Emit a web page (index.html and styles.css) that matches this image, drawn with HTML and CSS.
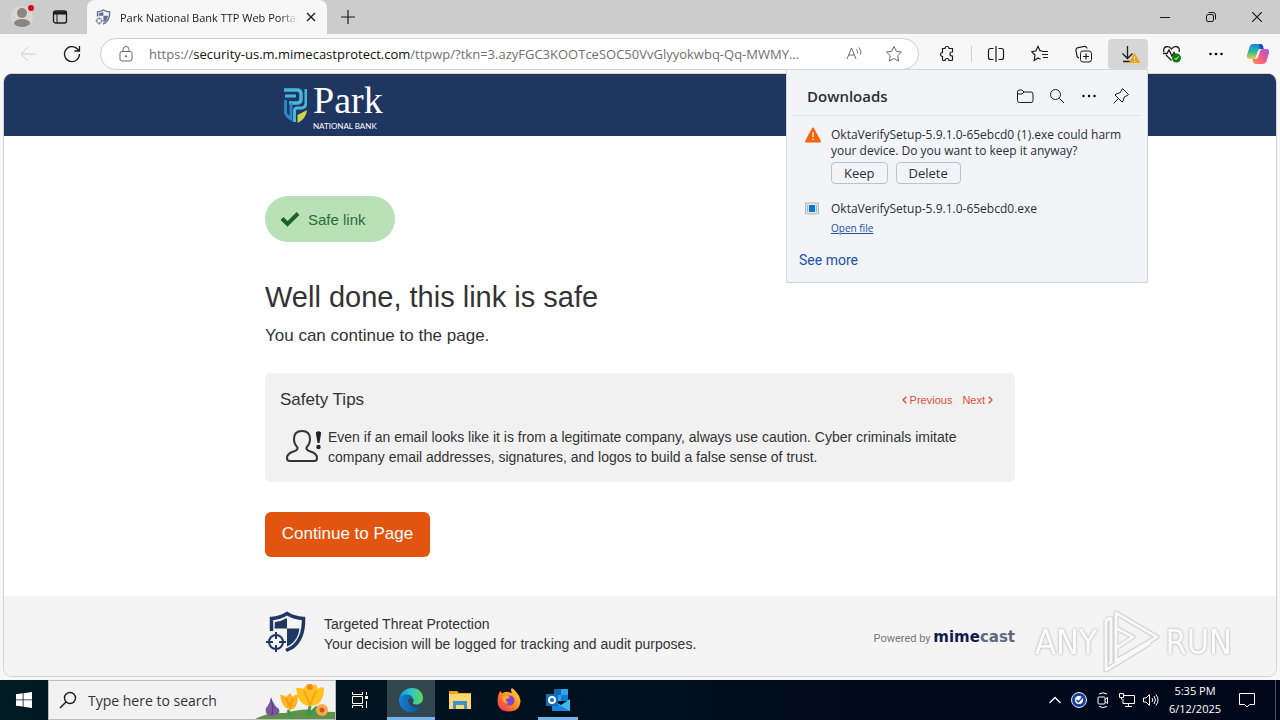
FILE: index.html
```html
<!DOCTYPE html>
<html lang="en">
<head>
    <meta charset="UTF-8">
    <title>Park National Bank TTP Web Portal</title>
    <meta name="viewport" content="width=device-width, initial-scale=1.0">
    <link rel="stylesheet" href="styles.css">
</head>
<body>
    <!-- Tabs -->
    <header class="titlebar">
        <button class="title-btn profile" aria-label="Profile">
            <svg width="24" height="24" viewBox="0 0 24 24"><circle cx="12" cy="12" r="11" fill="#d9d6d4"/><circle cx="12" cy="8" r="5" fill="#8b8582"/><ellipse cx="12" cy="18" rx="8" ry="4" fill="#8b8582"/><circle cx="21" cy="3" r="3" fill="#d0021b"/></svg>
        </button>
        <button class="title-btn" aria-label="Tab actions">
            <svg class="line" width="16" height="16" viewBox="0 0 16 16"><rect x="1.5" y="2" width="13" height="12" rx="2" stroke-width="1.300"/><path d="M1.5 4h13" stroke-width="3"/><path d="M5 4v10"/></svg>
        </button>
        <div class="tab">
            <svg class="favicon" width="16" height="16" viewBox="0 0 42 42"><use href="#shield"/></svg>
            <span class="tab-title">Park National Bank TTP Web Portal</span>
            <button class="tab-close" aria-label="Close tab">
                <svg class="line" width="10" height="10" viewBox="0 0 10 10"><path d="M1 1l8 8M9 1L1 9" stroke-width="1.300"/></svg>
            </button>
        </div>
        <button class="title-btn" aria-label="New tab">
            <svg class="line" width="14" height="14" viewBox="0 0 14 14"><path d="M7 0v14M0 7h14" stroke-width="1.200"/></svg>
        </button>
        <div class="window-controls">
            <button aria-label="Minimize"><svg class="line" width="10" height="10" viewBox="0 0 10 10"><path d="M0 5.5h10"/></svg></button>
            <button aria-label="Restore"><svg class="line" width="10" height="10" viewBox="0 0 10 10"><rect x=".5" y="2.5" width="7" height="7" rx="1.5"/><path d="M2.5.5H7A2.5 2.5 0 0 1 9.500 3v4.500"/></svg></button>
            <button aria-label="Close"><svg class="line" width="10" height="10" viewBox="0 0 10 10"><path d="M0 0l10 10M10 0L0 10" stroke-width="1.200"/></svg></button>
        </div>
    </header>

    <!-- Address bar and toolbar icons -->
    <nav class="toolbar">
        <button class="tool" aria-label="Back" disabled>
            <svg class="line faded" width="18" height="18" viewBox="0 0 18 18"><path d="M17 9H2M9 2L2 9l7 7"/></svg>
        </button>
        <button class="tool" aria-label="Refresh">
            <svg class="line" width="18" height="18" viewBox="0 0 18 18"><path d="M16.500 9A7.500 7.500 0 1 1 14 3.500L16 5.500M16.500 1v5h-5" stroke-width="1.300"/></svg>
        </button>
        <div class="address">
            <svg class="line grey" width="14" height="16" viewBox="0 0 14 16"><rect x="1" y="5.500" width="12" height="9.500" rx="2"/><path d="M4 5.500V3.500a3 3 0 0 1 6 0v2"/><circle cx="7" cy="10.300" r=".7" fill="#666"/></svg>
            <div class="url" role="textbox" aria-label="Address" tabindex="0">https://<span>security-us.m.mimecastprotect.com</span>/ttpwp/?tkn=3.azyFGC3KOOTceSOC50VvGlyyokwbq-Qq-MWMY...</div>
            <button class="tool" aria-label="Read aloud">
                <svg class="line grey" width="18" height="18" viewBox="0 0 18 18"><path d="M2 14L6.500 3 11 14M3.600 10h5.800M11.500 4.500q1.500 1.500 1 4M14 2.500q3 3 1.500 7"/></svg>
            </button>
            <button class="tool" aria-label="Add to favorites">
                <svg class="line grey" width="18" height="18" viewBox="0 0 18 18"><path d="M9 1.500l2.300 4.800 5.200.7-3.800 3.700.9 5.300L9 13.500 4.400 16l.9-5.300L1.500 7l5.200-.7z"/></svg>
            </button>
        </div>
        <button class="tool" aria-label="Extensions">
            <svg class="line" width="18" height="18" viewBox="0 0 18 18"><path d="M4.500 3.500H7a2 2 0 0 1 4 0h3.500V7H14a2 2 0 1 0 0 4h.5v3.500a1 1 0 0 1-1 1H11a2 2 0 0 0-4 0H5.500a1 1 0 0 1-1-1V11.500a2 2 0 0 1 0-4z" stroke-width="1.200"/></svg>
        </button>
        <span class="divider"></span>
        <button class="tool" aria-label="Split screen">
            <svg class="line" width="18" height="18" viewBox="0 0 18 18"><path d="M6.500 3.500h-3a2 2 0 0 0-2 2v7a2 2 0 0 0 2 2h3M11.500 3.500h3a2 2 0 0 1 2 2v7a2 2 0 0 1-2 2h-3M9 1v16" stroke-width="1.200"/></svg>
        </button>
        <button class="tool" aria-label="Favorites">
            <svg class="line" width="18" height="18" viewBox="0 0 18 18"><path d="M11 6l-2-.3L7 1.500 4.800 6l-4 .7L4 10l-.8 5.500L7 13l2.500 1.300M11 6.500h6M11 9.500h6M12 12.500h5" stroke-width="1.200"/></svg>
        </button>
        <button class="tool" aria-label="Collections">
            <svg class="line" width="18" height="18" viewBox="0 0 18 18"><rect x="5.500" y="6" width="11" height="11" rx="2.500"/><path d="M11 8.500v6M8 11.500h6M4 13a3 3 0 0 1-2-2L1 5.500a2.500 2.500 0 0 1 2-2.800l6-1.200a2.500 2.500 0 0 1 3 2" stroke-width="1.200"/></svg>
        </button>
        <div class="download-wrap">
            <button class="tool active" aria-label="Downloads">
                <svg class="line" width="24" height="22" viewBox="0 0 24 22"><path d="M11.500 3v12M6.500 10.500l5 5 5-5M7 18.500h8" stroke-width="1.300"/><path d="M18.500 10.500l5 9h-10z" fill="#f7a11a" stroke="#f7a11a"/><path d="M18.500 13.500v3M18.500 18v1" stroke="#fff"/></svg>
            </button>
            <section class="downloads">
                <div class="downloads-head">
                    <h2>Downloads</h2>
                    <button aria-label="Open downloads folder"><svg class="line" width="18" height="16" viewBox="0 0 18 16"><path d="M1.500 4a2 2 0 0 1 2-2H6l2 2h7a2 2 0 0 1 2 2v6.500a2 2 0 0 1-2 2H3.500a2 2 0 0 1-2-2zM1.500 6H6l2-2"/></svg></button>
                    <button aria-label="Search downloads"><svg class="line" width="16" height="16" viewBox="0 0 16 16"><circle cx="6.500" cy="6.500" r="5"/><path d="M10.300 10.300L15 15"/></svg></button>
                    <button aria-label="More options"><svg width="16" height="16" viewBox="0 0 16 16"><circle cx="2.500" cy="8" r="1.200"/><circle cx="8" cy="8" r="1.200"/><circle cx="13.500" cy="8" r="1.200"/></svg></button>
                    <button aria-label="Pin"><svg class="line" width="18" height="18" viewBox="0 0 18 18"><path d="M10.500 1.500l6 6-1.500 1.200-2.500 1L11 14l-1 1-7-7 1-1 4.500-1.500 1-2.500zM6.500 11.500L1.500 16.500"/></svg></button>
                </div>
                <div class="download-item">
                    <svg width="16" height="16" viewBox="0 0 16 16"><path d="M8 1.500L15 14.500H1z" fill="#f7630c" stroke="#f7630c" stroke-width="2" stroke-linejoin="round"/><path d="M8 5v5M8 11.500v1.500" stroke="#fff" stroke-width="1.300"/></svg>
                    <div>
                        <p>OktaVerifySetup-5.9.1.0-65ebcd0 (1).exe could harm your device. Do you want to keep it anyway?</p>
                        <div class="choices">
                            <button>Keep</button>
                            <button>Delete</button>
                        </div>
                    </div>
                </div>
                <div class="download-item">
                    <svg width="16" height="16" viewBox="0 0 16 16"><path d="M.5 2h13v11H.5z" fill="#e4e4e4" stroke="#b5b5b5"/><path d="M4 4h6v7H4z" fill="#0a78d4"/><path d="M2.500 4v7M11.500 4v7" stroke="#8ab8e0"/></svg>
                    <div>
                        <p>OktaVerifySetup-5.9.1.0-65ebcd0.exe</p>
                        <a class="open-file" href="#">Open file</a>
                    </div>
                </div>
                <a class="see-more" href="#">See more</a>
            </section>
        </div>
        <button class="tool" aria-label="Browser essentials">
            <svg class="line" width="20" height="18" viewBox="0 0 20 18"><path d="M2 7C0 1 7 0 9.500 4 12 0 19 1 17 7M4 10l5.500 5.500M1 8.500h4L7 5l3 6 2-3.500 1 1.500" stroke-width="1.300"/><circle cx="14.500" cy="13" r="4.500" fill="#107c10" stroke="none"/><path d="M12.500 13l1.500 1.500 2.500-3" stroke="#fff"/></svg>
        </button>
        <button class="tool" aria-label="Settings and more">
            <svg width="16" height="16" viewBox="0 0 16 16"><circle cx="2.500" cy="8" r="1.300"/><circle cx="8" cy="8" r="1.300"/><circle cx="13.500" cy="8" r="1.300"/></svg>
        </button>
        <button class="tool copilot" aria-label="Copilot">
            <svg width="22" height="20" viewBox="0 0 22 20">
                <defs>
                    <linearGradient id="cp1" x1="0" y1="0" x2="0" y2="1"><stop offset="0" stop-color="#2280d8"/><stop offset=".5" stop-color="#2ab9a5"/><stop offset="1" stop-color="#f3d02a"/></linearGradient>
                    <linearGradient id="cp2" x1="1" y1="0" x2="0" y2="1"><stop offset="0" stop-color="#a855e8"/><stop offset=".5" stop-color="#ee5a8c"/><stop offset="1" stop-color="#fb8a4c"/></linearGradient>
                </defs>
                <path d="M6 0h7q2 0 2.700 2l.8 3h-3q-2 0-2.600 2L9 13q-.7 2-3 2H3q-4 0-3-4L2.500 3Q3.500 0 6 0z" fill="url(#cp1)"/>
                <path d="M16 20H9q-2 0-2.700-2l-.8-3h3q2 0 2.600-2L13 7q.7-2 3-2h3q4 0 3 4l-2.500 8q-1 3-3.500 3z" fill="url(#cp2)"/>
                <path d="M12 0h2q1.500.5 2 2l.7 3H13z" fill="#1749b8"/>
            </svg>
        </button>
    </nav>

    <!-- Web page -->
    <main class="page">
        <div class="bank-bar">
            <div class="container">
                <div class="bank-logo">
                    <svg width="24" height="36" viewBox="0 0 24 36">
                        <path d="M1 3h13q4 0 4 4v5q0 4-4 4H6" fill="none" stroke="#49b6dc" stroke-width="3.500"/>
                        <path d="M2 9h11" fill="none" stroke="#49b6dc" stroke-width="3"/>
                        <path d="M23 2v13q0 6-5 6h-4q-2.500 0-2.500 3v11" fill="none" stroke="#49b6dc" stroke-width="3"/>
                        <path d="M2.500 13v13q2 4 5.500 6V16" fill="none" stroke="#2b86bd" stroke-width="3"/>
                        <path d="M14.500 28l9.500-5q-1 9-9.500 13z" fill="#c9d84a"/>
                    </svg>
                    <div>
                        <div class="bank-name">Park</div>
                        <div class="bank-sub">NATIONAL BANK</div>
                    </div>
                </div>
            </div>
        </div>

        <div class="container content">
            <div class="badge">
                <svg width="20" height="16" viewBox="0 0 20 16"><path d="M2 7.500L7.500 13 18 2.500" fill="none" stroke="#22602b" stroke-width="4"/></svg>
                Safe link
            </div>
            <h1>Well done, this link is safe</h1>
            <p class="lead">You can continue to the page.</p>

            <section class="tips">
                <div class="tips-head">
                    <h2>Safety Tips</h2>
                    <a href="#"><svg width="5" height="8" viewBox="0 0 5 8"><path d="M4.300.7L1 4l3.300 3.300"/></svg>Previous</a>
                    <a href="#">Next<svg width="5" height="8" viewBox="0 0 5 8"><path d="M.7.7L4 4 .7 7.300"/></svg></a>
                </div>
                <div class="tip">
                    <svg width="36" height="34" viewBox="0 0 36 34"><path d="M16 1c-5 0-8 3-8 8 0 4 1.500 6.500 3.500 8.500.5 2-.5 3-4 4C3 23 1 25 1 28q0 3 2.500 3h25q2.500 0 2.500-3c0-3-2-5-6.500-6.500-3.500-1-4.500-2-4-4C22.500 15.500 24 13 24 9c0-5-3-8-8-8z" fill="none" stroke="#333" stroke-width="2"/><path d="M29.800 2.500q2.700-2.500 5.400 0L33.500 13h-2z" fill="#222"/><circle cx="32.500" cy="17" r="2.200" fill="#222"/></svg>
                    <p>Even if an email looks like it is from a legitimate company, always use caution. Cyber criminals imitate company email addresses, signatures, and logos to build a false sense of trust.</p>
                </div>
            </section>

            <button class="continue">Continue to Page</button>
        </div>

        <footer class="page-footer">
            <div class="container">
                <svg class="shield" width="42" height="42" viewBox="0 0 42 42">
                    <g id="shield">
                        <path d="M6.500 20V7.500Q15 7 22 2.500 29 7 38.500 7.500 39 28 27 36.500L21 39.500" fill="none" stroke="#1f3763" stroke-width="3.500"/>
                        <path d="M10 11q6-.5 12-4v10.500H9.500z" fill="#1f3763"/>
                        <path d="M22 17.500h12.500Q33 29 25 34l-3 1.500z" fill="#1f3763"/>
                        <circle cx="11" cy="31" r="10" fill="#f4f4f4"/>
                        <circle cx="11" cy="31" r="7" fill="#f4f4f4" stroke="#1f3763" stroke-width="2"/>
                        <path d="M11 21v7M11 34v7M1 31h7M14 31h7" stroke="#1f3763" stroke-width="2"/>
                    </g>
                </svg>
                <div class="footer-text">
                    <p>Targeted Threat Protection</p>
                    <p>Your decision will be logged for tracking and audit purposes.</p>
                </div>
                <div class="powered">Powered by <b>mime<span>cast</span></b></div>
            </div>
        </footer>

        <div class="watermark">
            <span>ANY</span>
            <svg width="60" height="64" viewBox="0 0 60 64"><path d="M15 3L56 27 15 51zM15 18v20l17-11zM5 10v50l44-27M5 10l5-2v44" fill="none" stroke="#c9c9c9" stroke-width="5" stroke-linejoin="round"/><path d="M15 3L56 27 15 51zM15 18v20l17-11zM5 10v50l44-27M5 10l5-2v44" fill="none" stroke="#fafafa" stroke-width="3" stroke-linejoin="round"/></svg>
            <span>RUN</span>
        </div>
    </main>

    <!-- Windows taskbar -->
    <footer class="taskbar">
        <button class="task" aria-label="Start">
            <svg width="16" height="16" viewBox="0 0 16 16" fill="#fff"><path d="M0 2.300L6.700 1.300v6.200H0zM7.500 1.200L16 0v7.500H7.500zM0 8.300h6.700v6.300L0 13.700zM7.500 8.300H16V16l-8.500-1.200z"/></svg>
        </button>
        <label class="search">
            <svg class="line" width="18" height="18" viewBox="0 0 18 18"><circle cx="11" cy="7" r="5.500" stroke-width="1.400"/><path d="M7 11l-6 6" stroke-width="1.400"/></svg>
            <input type="text" placeholder="Type here to search" aria-label="Type here to search">
            <svg width="80" height="38" viewBox="0 0 80 38">
                <path d="M0 38Q12 31 30 32q20-6 35-2 8 1 15 1v7z" fill="#5f9148"/>
                <path d="M16 16q-1 7-5 11-2 7 6 8 9-1 7-7-5-3-8-12z" fill="#78579d"/><path d="M16 18q3 9 1 16" fill="none" stroke="#543b7e"/>
                <path d="M33 29l4 9M55 25q-1 6-3 11M62 26q-3 2-9 10" fill="none" stroke="#3d9a4b" stroke-width="3"/>
                <path d="M25 14q4 0 6 2l4-4 3 4q2-3 5-2 0 14-8 15-8-2-10-15z" fill="#ffb31e"/><path d="M31 17l4 9 3-9" fill="none" stroke="#f39a1d" stroke-width="2"/>
                <path d="M41 7q5-1 7 1l4-5 4 2 5-2 2 5q3-3 6-1 0 17-13 18Q43 25 41 7z" fill="#ffc31c"/><path d="M49 10l6 14 6-14" fill="none" stroke="#f6a51d" stroke-width="2"/><circle cx="55" cy="6" r="3" fill="#f18622"/>
                <circle cx="67" cy="29" r="6" fill="#f9a84b"/><circle cx="67" cy="29" r="2.500" fill="#c85a20"/>
            </svg>
        </label>
        <button class="task" aria-label="Task view">
            <svg class="line white" width="18" height="16" viewBox="0 0 18 16"><path d="M1.500 0v2.500h10V0M1.500 16v-2.500h10V16M1.500 4.500h10v7h-10zM15.500 0v3M15.500 9v7"/><path d="M14 4h3v3h-3z" fill="#fff" stroke="none"/></svg>
        </button>
        <button class="task current" aria-label="Microsoft Edge">
            <svg width="24" height="24" viewBox="0 0 24 24">
                <defs>
                    <linearGradient id="edgeTop" x1="0" x2="1"><stop offset="0" stop-color="#1b94dc"/><stop offset=".5" stop-color="#2ec4c7"/><stop offset="1" stop-color="#62d957"/></linearGradient>
                    <linearGradient id="edgeLow" x1="0" x2="1"><stop offset="0" stop-color="#1480d2"/><stop offset="1" stop-color="#0c4c9c"/></linearGradient>
                </defs>
                <path d="M0 12C1 3 8 0 13 0c7 0 11 5 11 10 0 4-3 6.500-6.500 6.500-3 0-4-1-3.500-2 1.500-1.500.5-5.500-3.500-5.500-5 0-8 4-7 9C1 16 0 14 0 12z" fill="url(#edgeTop)"/>
                <path d="M0 11c2-4 6-5 9-4.500 2 .3 4 1.500 5 3-4-1-6 3-4.500 6 2 4 8 5 13 2C20 22 16 24 12 24 5 24 0 19 0 11z" fill="url(#edgeLow)"/>
            </svg>
        </button>
        <button class="task" aria-label="File Explorer">
            <svg width="22" height="20" viewBox="0 0 22 20"><path d="M0 1h8l2 2h12v16H0z" fill="#e9a825"/><path d="M0 4h22v15H0z" fill="#ffd76b"/><path d="M4 19v-8h14v8h-3v-4H7v4z" fill="#3a94d6"/></svg>
        </button>
        <button class="task" aria-label="Firefox">
            <svg width="24" height="24" viewBox="0 0 24 24">
                <defs><linearGradient id="fox" x1="1" y1="0" x2="0" y2="1"><stop offset="0" stop-color="#ffe83c"/><stop offset=".5" stop-color="#ff8a1c"/><stop offset="1" stop-color="#f0246a"/></linearGradient></defs>
                <path d="M3 3q1 2 3 2 3-2 5-1l4 1q-2-3 0-5 3 2 5 5 3 3 3.500 7.500Q23 23.500 12 23.500.500 23.500.500 12.500.500 7 3 3z" fill="url(#fox)"/>
                <circle cx="12.500" cy="12.500" r="5" fill="#7a45d8"/><path d="M5 9q4-3 8 0-1 2-4 2 0 3 3 4-6 2-7-6z" fill="#ffa52a"/>
            </svg>
        </button>
        <button class="task running" aria-label="Outlook">
            <svg width="24" height="22" viewBox="0 0 24 22"><path d="M8 0h14v12H8z" fill="#28a8ea"/><path d="M8 0h7v6H8z" fill="#1269b6"/><path d="M15 6h7v6h-7z" fill="#1478d0"/><path d="M6 11l9 5 9-6v12H6z" fill="#3cb9f0"/><path d="M6 12l18 10H6z" fill="#1a82d8"/><path d="M0 5h12v12H0z" fill="#0f6cbd"/><circle cx="6" cy="11" r="3" fill="none" stroke="#fff" stroke-width="2"/></svg>
        </button>

        <div class="tray">
            <button aria-label="Show hidden icons"><svg class="line white" width="12" height="8" viewBox="0 0 12 8"><path d="M.500 7L6 1.500 11.500 7" stroke-width="1.300"/></svg></button>
            <button aria-label="Okta Verify"><svg width="16" height="16" viewBox="0 0 16 16"><circle cx="8" cy="8" r="7.500" fill="#1c3f9c" stroke="#dfe9ff"/><circle cx="8" cy="8" r="4" fill="#fff"/><path d="M5.500 8l2 2L12 4.500" fill="none" stroke="#1c3f9c" stroke-width="1.500"/></svg></button>
            <button aria-label="Meet Now"><svg class="line white" width="14" height="16" viewBox="0 0 14 16"><rect x="2" y="5" width="7" height="7" rx="1"/><path d="M9 7.500l2.500-2v6L9 9.500M3 2q4-2.500 8 0M3 14.500q4 2 8 0"/></svg></button>
            <button aria-label="Network"><svg class="line white" width="16" height="16" viewBox="0 0 16 16"><path d="M5 3.500h10.500v8H4V7M9.500 11.500v3M6 14.500h7M.5 1.500h4v4h-4zM2.500 5.500v2"/></svg></button>
            <button aria-label="Volume"><svg class="line white" width="16" height="14" viewBox="0 0 16 14"><path d="M.5 5h2.500l3.500-3.500v11L3 9H.5zM9 5q1.500 2 0 4M11 3q3 4 0 8M13 1.500q4 5.500 0 11"/></svg></button>
            <div class="clock"><span>5:35 PM</span><span>6/12/2025</span></div>
            <button class="notify" aria-label="Notifications"><svg class="line white" width="18" height="16" viewBox="0 0 18 16"><path d="M1.500 1.500h15v11h-5L9 15l-2.500-2.500h-5z"/></svg></button>
        </div>
    </footer>
</body>
</html>
```
FILE: styles.css
```css
* {
    margin: 0;
    padding: 0;
    box-sizing: border-box;
}
body {
    font-family: "Open Sans", "Noto Sans", sans-serif;
    font-size: 12px;
    color: #1b1b1b;
    background: #f7f7f7;
    min-height: 100vh;
    display: flex;
    flex-direction: column;
}
button {
    font: inherit;
    color: inherit;
    background: none;
    border: none;
    display: flex;
    align-items: center;
    justify-content: center;
}
svg {
    flex-shrink: 0;
}
.line {
    fill: none;
    stroke: #1b1b1b;
}
.line.grey {
    stroke: #6b6b6b;
}
.line.faded {
    stroke: #cfcfcf;
}
.line.white {
    stroke: #fff;
}

/* tab strip */
.titlebar {
    height: 34px;
    background: #cccccc;
    display: flex;
    align-items: stretch;
    padding-left: 3px;
}
.title-btn {
    width: 38px;
}
.tab {
    width: 240px;
    margin-left: 8px;
    padding: 0 10px 0 8px;
    display: flex;
    align-items: center;
    background: #f7f7f7;
    border-radius: 8px 8px 0 0;
}
.favicon {
    opacity: .7;
}
.tab-title {
    flex: 1;
    margin-left: 9px;
    font-size: 11px;
    white-space: nowrap;
    overflow: hidden;
    -webkit-mask-image: linear-gradient(to right, #000 90%, transparent);
    mask-image: linear-gradient(to right, #000 90%, transparent);
}
.tab-close {
    width: 12px;
    margin-left: 7px;
}
.tab + .title-btn {
    width: 42px;
}
.window-controls {
    display: flex;
    margin-left: auto;
}
.window-controls button {
    width: 46px;
}

/* toolbar */
.toolbar {
    height: 39px;
    padding: 0 4px 0 8px;
    display: flex;
    align-items: center;
    gap: 4px;
}
.tool {
    width: 40px;
    height: 30px;
    border-radius: 4px;
    flex-shrink: 0;
}
.tool.active {
    background: #d6d6d6;
}
.tool.copilot {
    width: 36px;
}
.address {
    flex: 1;
    min-width: 0;
    height: 32px;
    margin: 0 4px;
    padding: 0 4px 0 18px;
    display: flex;
    align-items: center;
    background: #fff;
    border: 1px solid #d0d0d0;
    border-radius: 16px;
}
.url {
    flex: 1;
    margin-left: 16px;
    font-size: 13px;
    color: #707070;
    white-space: nowrap;
    overflow: hidden;
}
.url span {
    color: #111;
}
.divider {
    width: 1px;
    height: 16px;
    background: #cfcfcf;
}

/* downloads flyout */
.download-wrap {
    position: relative;
}
.downloads {
    position: absolute;
    top: 100%;
    right: 0;
    z-index: 2;
    width: 362px;
    height: 214px;
    background: #f2f4f8;
    border: 1px solid #d3d6dc;
    color: #2b2f36;
}
.downloads-head {
    height: 46px;
    margin: 0 6px;
    padding: 8px 4px 0 14px;
    display: flex;
    align-items: center;
    border-bottom: 1px solid #e1e4e9;
}
.downloads-head h2 {
    flex: 1;
    font-size: 15px;
    font-weight: 600;
}
.downloads-head button {
    width: 32px;
    height: 32px;
}
.download-item {
    display: flex;
    align-items: flex-start;
    gap: 10px;
    padding: 11px 16px 0 18px;
    line-height: 16px;
}
.choices {
    display: flex;
    gap: 8px;
    margin-top: 3px;
    margin-bottom: 6px;
}
.choices button {
    height: 22px;
    padding: 0 12px;
    font-size: 13px;
    border: 1px solid #bfc2c8;
    border-radius: 4px;
}
.open-file {
    display: block;
    margin-top: 3px;
    font-size: 10px;
    color: #2450a8;
}
.see-more {
    display: inline-block;
    margin: 15px 12px 0;
    font-family: Roboto, sans-serif;
    font-size: 14px;
    line-height: 18px;
    color: #2450a8;
    text-decoration: none;
}

/* web page */
.page {
    position: relative;
    flex: 1;
    margin: 1px 4px 4px;
    display: flex;
    flex-direction: column;
    background: #fff;
    border-radius: 8px;
    box-shadow: 0 0 0 1px #d4d4d4;
    overflow: hidden;
    font-family: "Liberation Sans", Arial, sans-serif;
    color: #333;
}
.container {
    width: 100%;
    max-width: 750px;
    margin: 0 auto;
}
.bank-bar {
    height: 62px;
    background: #1f3661;
    border-top: 2px solid #2a3448;
}
.bank-logo {
    display: flex;
    align-items: center;
    gap: 6px;
    height: 58px;
    padding-left: 18px;
    color: #fff;
}
.bank-name {
    font-family: "Liberation Serif", serif;
    font-size: 38px;
    line-height: 42px;
}
.bank-sub {
    font-family: Lato, sans-serif;
    font-size: 8px;
    line-height: 10px;
}
.content {
    flex: 1;
    padding: 60px 0 39px;
}
.badge {
    width: 130px;
    height: 46px;
    padding-left: 15px;
    display: flex;
    align-items: center;
    gap: 8px;
    font-size: 15px;
    color: #2f6b38;
    background: #b8e1b8;
    border-radius: 23px;
}
h1 {
    margin-top: 37px;
    font-size: 29px;
    font-weight: normal;
    line-height: 36px;
}
.lead {
    margin-top: 9px;
    font-size: 17px;
    line-height: 24px;
}
.tips {
    margin-top: 25px;
    height: 109px;
    padding: 15px;
    background: #f1f1f1;
    border-radius: 5px;
}
.tips-head {
    display: flex;
    align-items: center;
    gap: 10px;
    padding-right: 7px;
}
.tips-head h2 {
    flex: 1;
    font-size: 17px;
    font-weight: normal;
    line-height: 24px;
}
.tips-head a {
    display: flex;
    align-items: center;
    gap: 3px;
    font-size: 11px;
    color: #dd5135;
    text-decoration: none;
}
.tips-head path {
    fill: none;
    stroke: #dd5135;
    stroke-width: 1.5;
}
.tip {
    display: flex;
    align-items: center;
    gap: 6px;
    margin-top: 15px;
    padding-left: 6px;
    font-size: 14px;
    line-height: 20px;
}
.continue {
    width: 165px;
    height: 45px;
    margin-top: 30px;
    padding-bottom: 2px;
    font-size: 17px;
    color: #fff;
    background: #e3540f;
    border-radius: 6px;
}
.page-footer {
    height: 80px;
    background: #f4f4f4;
}
.page-footer .container {
    display: flex;
    align-items: center;
    height: 76px;
}
.shield {
    margin-bottom: 4px;
}
.footer-text {
    flex: 1;
    margin-left: 17px;
    font-size: 14px;
    line-height: 20px;
}
.powered {
    padding-top: 6px;
    font-family: Roboto, sans-serif;
    font-size: 11px;
    color: #777;
}
.powered b {
    font-family: "DejaVu Sans", sans-serif;
    font-size: 15px;
    color: #101b4d;
}
.powered b span {
    color: #5c6a7d;
}
.watermark {
    position: absolute;
    right: 44px;
    bottom: 2px;
    display: flex;
    align-items: center;
    gap: 4px;
    font-family: "DejaVu Sans Condensed", "DejaVu Sans", sans-serif;
    font-size: 34px;
    color: #fff;
    text-shadow: 0 0 2px #aaa, 0 0 3px #bbb;
    opacity: .8;
}

/* taskbar */
.taskbar {
    height: 40px;
    display: flex;
    background: linear-gradient(to right, #001a22, #000d1c 60%, #00071a);
    color: #fff;
}
.task {
    width: 48px;
    margin-right: 1px;
}
.task:first-child {
    margin-right: 0;
}
.task.current {
    margin-left: 2px;
    background: #33474f;
    border-bottom: 3px solid #76b4ea;
    padding-top: 3px;
}
.task.running {
    background: linear-gradient(#76b4ea, #76b4ea) center bottom / 40px 3px no-repeat;
}
.search {
    width: 288px;
    display: flex;
    align-items: center;
    padding-left: 10px;
    background: #f2f2f2;
    border: 1px solid #b9bdbf;
}
.search input {
    flex: 1;
    min-width: 0;
    margin-left: 11px;
    font: inherit;
    font-size: 14px;
    background: none;
    border: none;
    outline: none;
}
.search input::placeholder {
    color: #333;
    opacity: 1;
}
.tray {
    display: flex;
    align-items: stretch;
    margin-left: auto;
    margin-right: 4px;
    border-right: 1px solid #4a5060;
}
.tray button {
    width: 24px;
}
.clock {
    width: 64px;
    display: flex;
    flex-direction: column;
    align-items: center;
    justify-content: center;
    font-size: 11px;
    line-height: 18px;
}
.tray .notify {
    width: 40px;
    margin-right: 8px;
}
```
